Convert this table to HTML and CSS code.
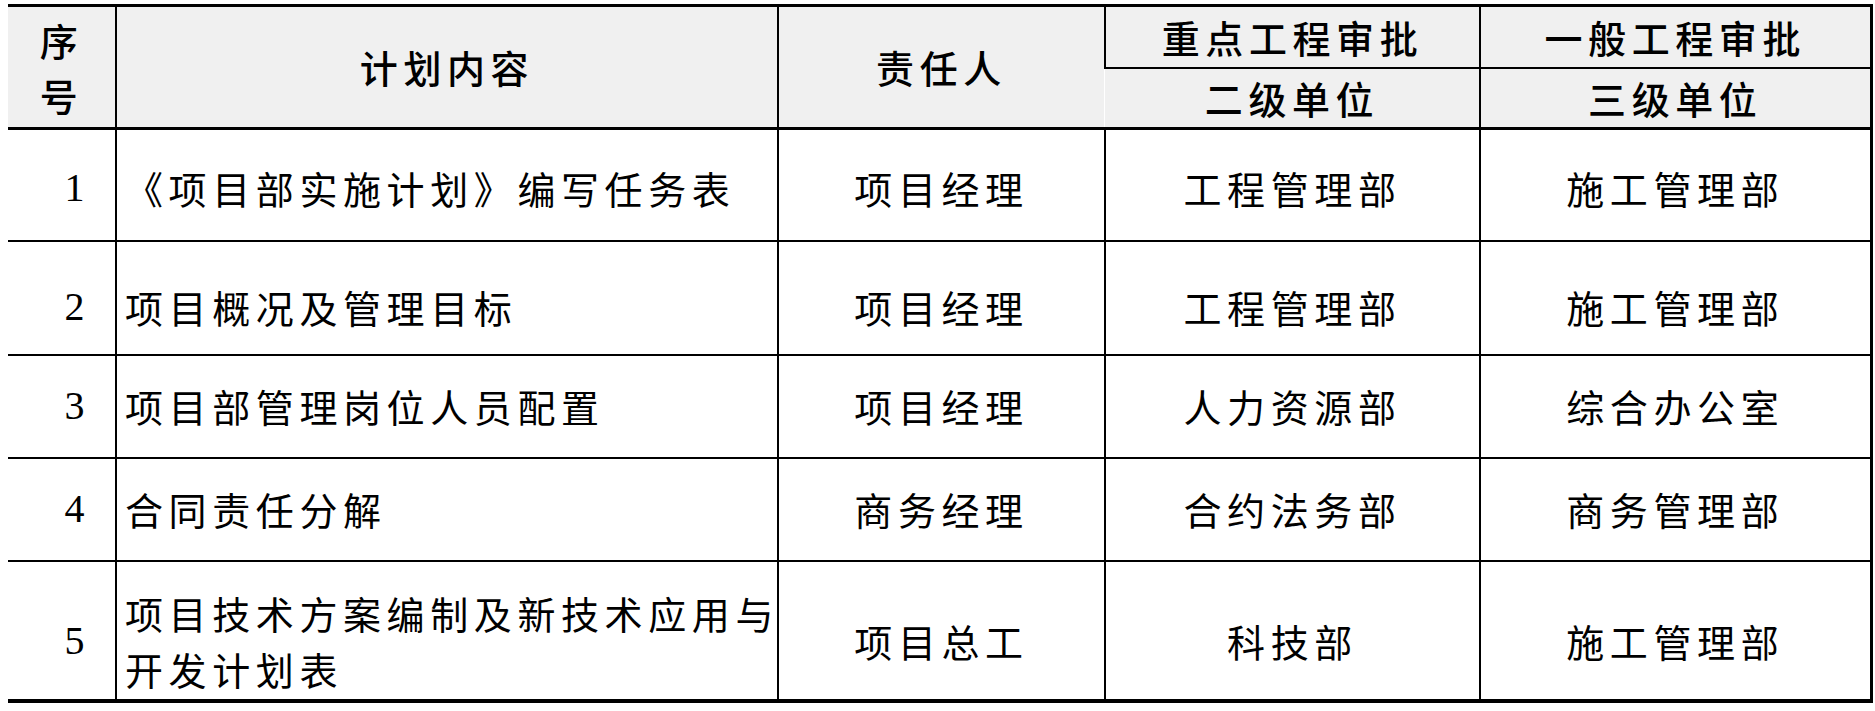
FILE: index.html
```html
<!DOCTYPE html>
<html lang="zh-CN">
<head>
<meta charset="utf-8">
<title>项目部实施计划</title>
<link rel="stylesheet" href="styles.css">
</head>
<body>
<table class="plan">
  <colgroup>
    <col class="c-no">
    <col class="c-content">
    <col class="c-owner">
    <col class="c-key">
    <col class="c-general">
  </colgroup>
  <thead>
    <tr class="h1">
      <th rowspan="2" class="no-head">序<br>号</th>
      <th rowspan="2">计划内容</th>
      <th rowspan="2">责任人</th>
      <th>重点工程审批</th>
      <th>一般工程审批</th>
    </tr>
    <tr class="h2">
      <th>二级单位</th>
      <th>三级单位</th>
    </tr>
  </thead>
  <tbody>
    <tr class="r1">
      <td class="num">1</td>
      <td class="text">《项目部实施计划》编写任务表</td>
      <td>项目经理</td>
      <td>工程管理部</td>
      <td>施工管理部</td>
    </tr>
    <tr class="r2">
      <td class="num">2</td>
      <td class="text">项目概况及管理目标</td>
      <td>项目经理</td>
      <td>工程管理部</td>
      <td>施工管理部</td>
    </tr>
    <tr class="r3">
      <td class="num">3</td>
      <td class="text">项目部管理岗位人员配置</td>
      <td>项目经理</td>
      <td>人力资源部</td>
      <td>综合办公室</td>
    </tr>
    <tr class="r4">
      <td class="num">4</td>
      <td class="text">合同责任分解</td>
      <td>商务经理</td>
      <td>合约法务部</td>
      <td>商务管理部</td>
    </tr>
    <tr class="r5">
      <td class="num">5</td>
      <td class="text">项目技术方案编制及新技术应用与<br>开发计划表</td>
      <td>项目总工</td>
      <td>科技部</td>
      <td>施工管理部</td>
    </tr>
  </tbody>
</table>
</body>
</html>
```

FILE: styles.css
```css
html, body {
  margin: 0;
  padding: 0;
  background: #ffffff;
}

body {
  padding: 4px 0 0 8px;
  font-family: "Noto Sans CJK SC", "Noto Sans", sans-serif;
  color: #000000;
}

.plan {
  border-collapse: collapse;
  table-layout: fixed;
  width: 1863px;
  border-top: 3px solid #000;
  border-bottom: 4px solid #000;
  border-right: 3px solid #000;
}

.c-no { width: 108px; }
.c-content { width: 662px; }
.c-owner { width: 327px; }
.c-key { width: 375px; }
.c-general { width: 391px; }

.plan th,
.plan td {
  padding: 0;
  border-left: 2px solid #000;
  border-top: 2px solid #000;
  text-align: center;
  vertical-align: middle;
  font-size: 38px;
  letter-spacing: 5.6px;
  line-height: 56px;
  white-space: nowrap;
  overflow: hidden;
}

.plan th:first-child,
.plan td:first-child {
  border-left: none;
}

.plan th {
  background: #f0f0f0;
  font-weight: 500;
}

.plan thead tr.h1 th {
  border-top: 3px solid #000;
}

.plan tbody tr:first-child td {
  border-top: 3px solid #000;
}

.plan .h1 { height: 62px; }
.plan .h2 { height: 61px; }
.plan .r1 { height: 112px; }
.plan .r2 { height: 114px; }
.plan .r3 { height: 103px; }
.plan .r4 { height: 103px; }
.plan .r5 { height: 140px; }

.plan .r1 td { padding-top: 6px; }
.plan .r2 td { padding-top: 18px; }
.plan .r5 td { padding-top: 22px; }

.plan .no-head {
  line-height: 55px;
}

.plan td {
  font-weight: 400;
}

.plan td.num {
  font-family: "Liberation Serif", "Times New Roman", serif;
  font-size: 40px;
  letter-spacing: 0;
  padding-left: 26px;
}

.plan td.text {
  text-align: left;
  padding-left: 8px;
}
```
